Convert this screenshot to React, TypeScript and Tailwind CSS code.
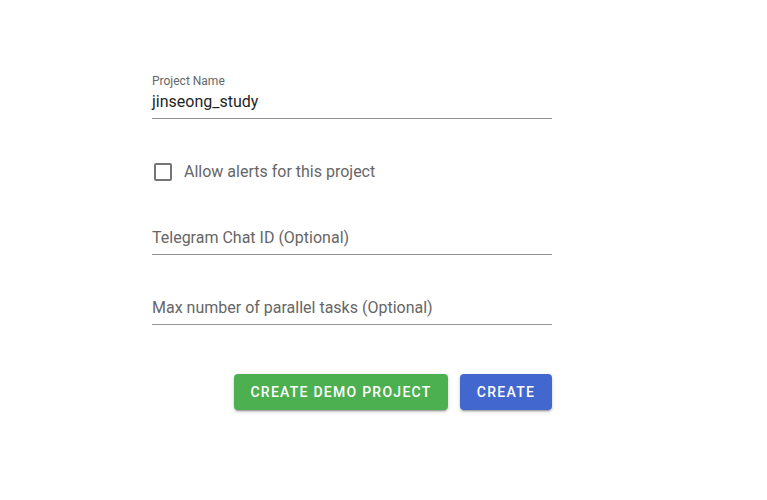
import type { JSX } from "react";

const FIELD_TEXT = "text-[16px] leading-[20px] h-[20px]";

function UnderlineField({ placeholder, gap, pad }: { placeholder: string; gap: string; pad: string }): JSX.Element {
    return (
        <div className={`${gap} ${pad} border-b border-[#949494]`}>
            <div className={`${FIELD_TEXT} text-[#666666]`}>{placeholder}</div>
        </div>
    );
}

export default function App(): JSX.Element {
    return (
        <div
            className="w-full h-[500px] bg-white pt-[74px]"
            style={{ fontFamily: "Roboto, 'Liberation Sans', sans-serif" }}
        >
            <form className="ml-[152px] w-[400px] flex flex-col">
                <div className="pb-[6px] border-b border-[#949494]">
                    <div className="text-[12px] leading-[14px] text-[#666666]">Project Name</div>
                    <div className={`${FIELD_TEXT} mt-[4px] text-[#1f1f1f]`}>jinseong_study</div>
                </div>

                <label className="mt-[41px] h-[24px] flex items-center">
                    <span className="ml-[2px] w-[18px] h-[18px] rounded-[2px] border-2 border-[#757575]" />
                    <span className="ml-[12px] text-[16px] leading-[20px] text-[#666666]">
                        Allow alerts for this project
                    </span>
                </label>

                <UnderlineField placeholder="Telegram Chat ID (Optional)" gap="mt-[44px]" pad="pb-[6px]" />
                <UnderlineField placeholder="Max number of parallel tasks (Optional)" gap="mt-[43px]" pad="pb-[6px]" />

                <div className="mt-[49px] flex justify-end gap-[12px]">
                    <button
                        type="button"
                        className="h-[36px] w-[214px] rounded-[4px] bg-[#4caf50] text-white text-[14px] font-medium uppercase tracking-[0.09em] shadow-[0_3px_1px_-2px_rgba(0,0,0,0.2),0_2px_2px_0_rgba(0,0,0,0.14),0_1px_5px_0_rgba(0,0,0,0.12)]"
                    >
                        Create Demo Project
                    </button>
                    <button
                        type="button"
                        className="h-[36px] w-[92px] rounded-[4px] bg-[#4267cf] text-white text-[14px] font-medium uppercase tracking-[0.09em] shadow-[0_3px_1px_-2px_rgba(0,0,0,0.2),0_2px_2px_0_rgba(0,0,0,0.14),0_1px_5px_0_rgba(0,0,0,0.12)]"
                    >
                        Create
                    </button>
                </div>
            </form>
        </div>
    );
}
